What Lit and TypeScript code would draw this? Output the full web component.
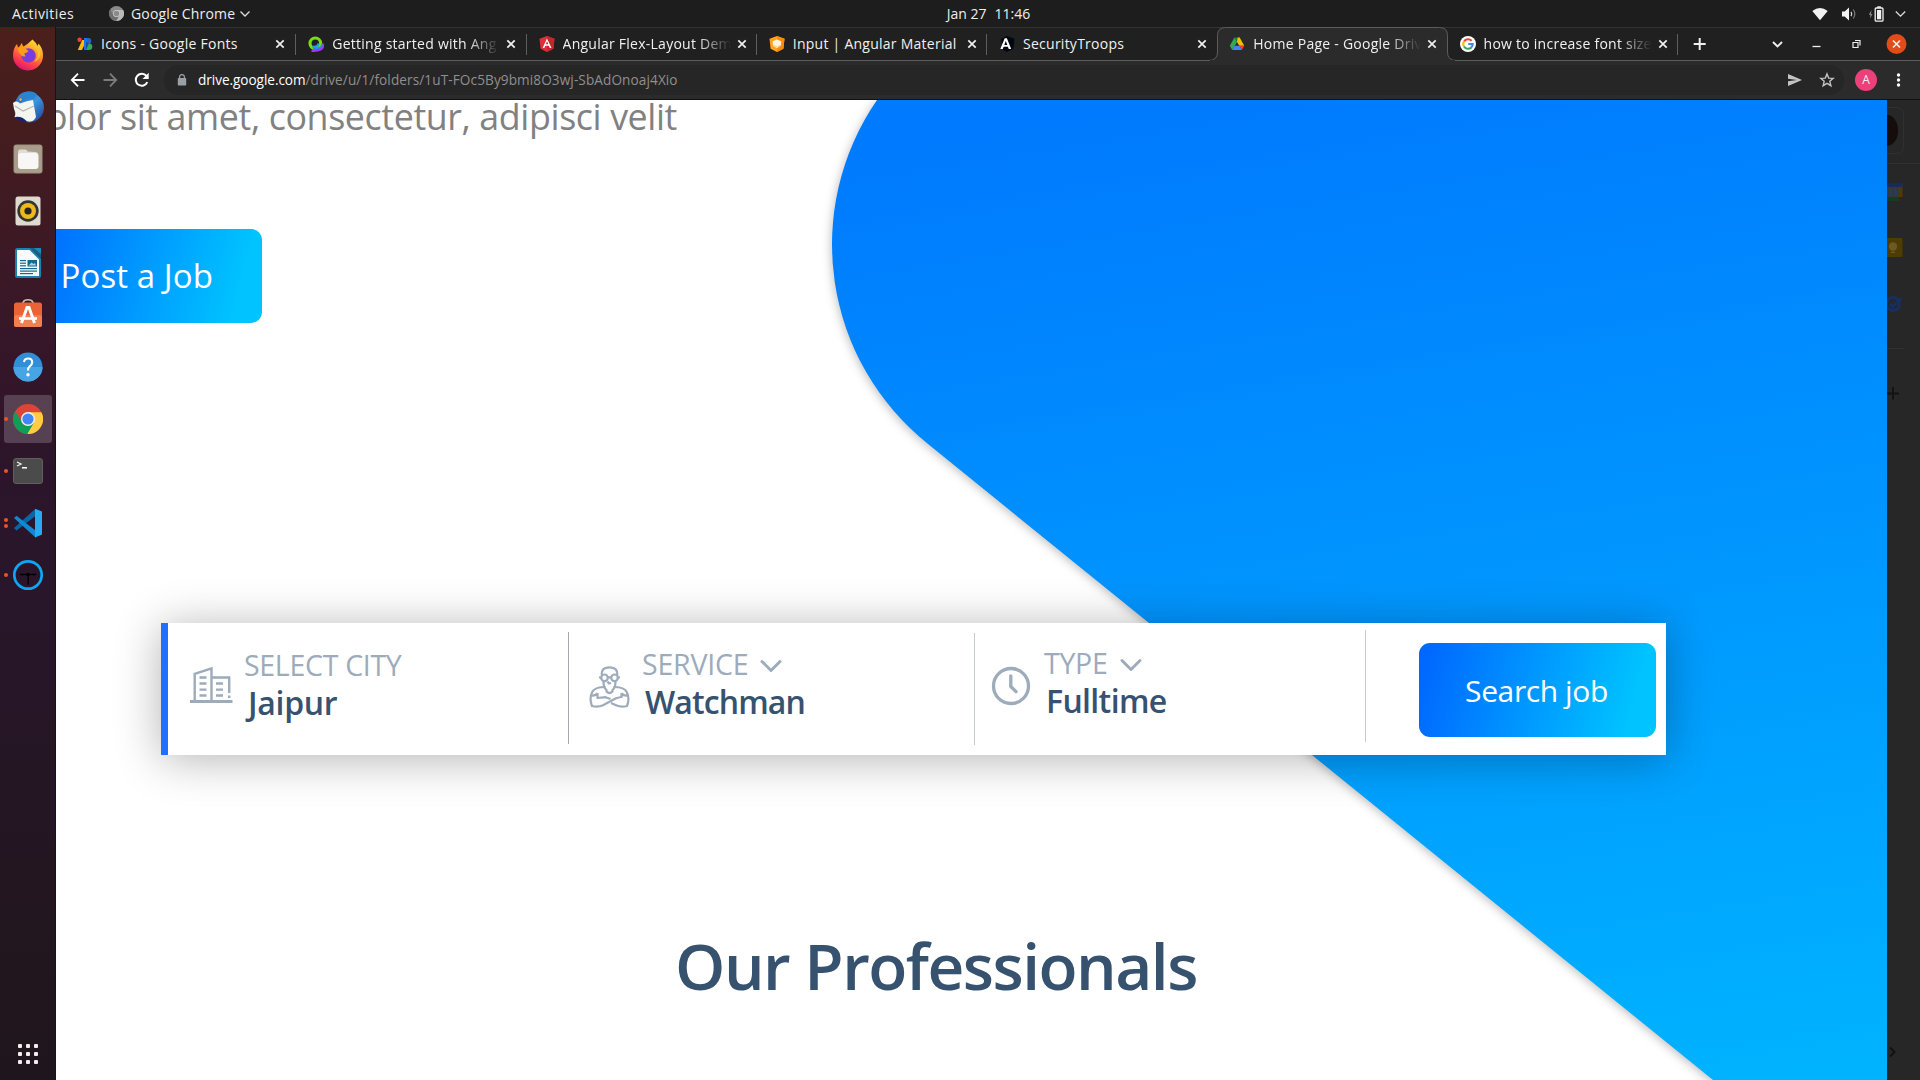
import { LitElement, html, css, svg, nothing } from "lit";
import { customElement } from "lit/decorators.js";
import { classMap } from "lit/directives/class-map.js";

const chromeLogo = (size: number, gray = false) => {
  const c = gray
    ? { r: "#8b8b8b", y: "#b9b9b9", g: "#6f6f6f", b: "#8a8a8a", w: "#d0d0d0" }
    : { r: "#dc4437", y: "#ffcd40", g: "#0f9d58", b: "#4285f4", w: "#f1f1f1" };
  return html`<svg width=${size} height=${size} viewBox="0 0 30 30">
    <circle cx="15" cy="15" r="15" fill=${c.r} />
    <path d="M15 8.2H28.4A15 15 0 0 1 14.2 30L20.9 18.4Z" fill=${c.y} />
    <path d="M2.2 7.2L9.1 18.4Q11.5 22.5 17 21.6L20.9 18.4L14.2 30A15 15 0 0 1 2.2 7.2Z" fill=${c.g} />
    <circle cx="15" cy="15" r="7" fill=${c.w} />
    <circle cx="15" cy="15" r="5.6" fill=${c.b} />
  </svg>`;
};

const favFonts = html`<svg width="16" height="16" viewBox="0 0 16 16">
  <path d="M5.2 4h4.3L5 14H.8Z" fill="#ffbb00" /><circle cx="2.6" cy="3.8" r="2.2" fill="#ea4335" />
  <path d="M7 2h3.2v12H7Z" fill="#1a73e8" /><path d="M10 2h1.4a2.9 2.9 0 0 1 0 5.8H10Z" fill="#2a63c8" />
  <path d="M9.8 7.4h2.2a3.3 3.3 0 0 1 0 6.6H9.8Z" fill="#34a853" /><path d="M9 5.6l2.8 2-2.8 6Z" fill="#174ea6" />
</svg>`;
const favRouting = html`<svg width="16" height="16" viewBox="0 0 16 16">
  <circle cx="7.300" cy="7.300" r="5.300" fill="none" stroke="#78dc10" stroke-width="3.200" />
  <path d="M14.600 7.500Q14.500 13.500 5 13" stroke="#1c8fe8" stroke-width="2.400" fill="none" />
  <path d="M4.500 10.800Q10 11.500 10.500 7.500" stroke="#1f9cf0" stroke-width="2.400" fill="none" />
  <path d="M15.300 8.500Q15.500 15.500 3.500 14.800" stroke="#a334fa" stroke-width="2.200" fill="none" />
</svg>`;
const favAngular = html`<svg width="16" height="16" viewBox="0 0 16 16">
  <path d="M8 0l7.500 2.700-1.100 10L8 16l-6.400-3.300L.5 2.700Z" fill="#dd3138" /><path d="M8 0l7.500 2.700-1.100 10L8 16Z" fill="#c3262e" />
  <path d="M8 2.400L3.600 12h1.700l1-2.300h3.500l1 2.300h1.700ZM8 5.300l1.300 3H6.800Z" fill="#fff" fill-rule="evenodd" />
</svg>`;
const favMaterial = html`<svg width="16" height="16" viewBox="0 0 16 16">
  <path d="M8 0l7.500 2.700-1.100 10L8 16l-6.400-3.300L.5 2.700Z" fill="#ffa21f" /><path d="M8 0l7.500 2.700-1.100 10L8 16Z" fill="#fb8c00" />
  <path d="M8 3.600l4.200 1.600L12 9.600 8 12.300 3.900 9.800 3.800 5.200Z" fill="#fff3dc" /><path d="M4.200 9l3.800 2.200L11.900 9" stroke="#ffc977" fill="none" />
</svg>`;
const favDark = html`<svg width="16" height="16" viewBox="0 0 16 16">
  <path d="M8 0l7.500 2.700-1.100 10L8 16l-4-2.100L2 3Z" fill="#020812" />
  <path d="M5.700 2.200h2.200L12.200 13H9.700l-.8-2.200H4.600L3.800 13H1.300ZM6.800 5.100L5.300 9h3Z" fill="#fff" fill-rule="evenodd" />
</svg>`;
const favDrive = html`<svg width="16" height="16" viewBox="0 0 16 16">
  <path d="M5.400 1.600h5.200L13 5.800 8 6.100Z" fill="#188038" /><path d="M5.400 1.600L.8 9.700l2.400 4.200L8 6.100Z" fill="#34a853" />
  <path d="M10.600 1.600H8.700L8 6.100l2.300 3.700h5Z" fill="#fbbc04" /><path d="M10.300 9.700h5l-2.500 4.400Z" fill="#ea4335" />
  <path d="M5.600 9.700h4.800l2.400 4.400H3.200Z" fill="#4285f4" />
</svg>`;
const favGoogle = html`<svg width="16" height="16" viewBox="0 0 16 16">
  <circle cx="8" cy="8" r="8" fill="#fff" /><g fill="none" stroke-width="2.100">
  <path d="M11.600 4.800A4.700 4.700 0 0 0 4 5.500" stroke="#ea4335" /><path d="M4 5.500a4.700 4.700 0 0 0 0 5" stroke="#fbbc05" />
  <path d="M4 10.500a4.700 4.700 0 0 0 7.200 1.100" stroke="#34a853" /><path d="M8.200 8h4.500a4.700 4.700 0 0 1-1.600 3.600" stroke="#4285f4" /></g>
</svg>`;

const TABS = [
  { icon: favFonts, title: "Icons - Google Fonts" },
  { icon: favRouting, title: "Getting started with Ang", fade: true },
  { icon: favAngular, title: "Angular Flex-Layout Dem", fade: true },
  { icon: favMaterial, title: "Input | Angular Material" },
  { icon: favDark, title: "SecurityTroops" },
  { icon: favDrive, title: "Home Page - Google Driv", fade: true, active: true },
  { icon: favGoogle, title: "how to increase font size", fade: true },
];

@customElement("system-bar")
class SystemBar extends LitElement {
  static styles = css`
    :host { display: grid; grid-template-columns: 1fr auto 1fr; align-items: center; height: 27px; background: #1d1d1d;
      color: #eee; font: 14px/26px "Open Sans", sans-serif; white-space: pre; }
    svg { display: block; }
    .left { display: flex; align-items: center; padding-left: 12px; }
    .act { letter-spacing: 0.45px; width: 97px; }
    .app { letter-spacing: 0.17px; padding: 0 5px 0 7px; }
    .clock { display: flex; gap: 8px; transform: translateX(28.5px); }
    .right { display: flex; align-items: center; justify-content: flex-end; padding-right: 14px; }
    .wifi { margin-right: 13px; } .vol { margin-right: 11px; } .bat { margin-right: 11px; }
  `;
  render() {
    return html`
      <div class="left"><span class="act">Activities</span>${chromeLogo(15, true)}<span class="app">Google Chrome</span>
        ${svg`<svg width="10" height="8" viewBox="0 0 10 8" fill="none" stroke="#ddd" stroke-width="1.300"><path d="M.5 1.500L5 6l4.500-4.500"/></svg>`}</div>
      <div class="clock"><span>Jan 27</span><span>11:46</span></div>
      <div class="right">
        <svg class="wifi" width="16" height="14" viewBox="0 0 16 14"><path d="M.3 4Q8-2.200 15.700 4L8 13.200Z" fill="#f2f2f2" /></svg>
        <svg class="vol" width="16" height="14" viewBox="0 0 16 14"><path d="M1 4.500h2.700L8 .5v13L3.700 9.500H1Z" fill="#f2f2f2" />
          <path d="M10 4.800q1.500 2.200 0 4.400" stroke="#ddd" fill="none" stroke-width="1.200" /><path d="M12.300 2.500q3 4.500 0 9" stroke="#777" fill="none" stroke-width="1.200" /></svg>
        <svg class="bat" width="16" height="16" viewBox="0 0 16 16"><path d="M3.500 4L.8 8.800h1.700L2 12.500 4.500 8H3Z" fill="#8c8c8c" />
          <rect x="7.200" y="2" width="7.800" height="13.200" rx="1" fill="none" stroke="#f2f2f2" stroke-width="1.300" /><rect x="9" y="4" width="4.200" height="9.300" fill="#f2f2f2" /><rect x="9.300" y=".3" width="3.600" height="1.500" fill="#f2f2f2" /></svg>
        <svg width="11" height="8" viewBox="0 0 11 8" fill="none" stroke="#ddd" stroke-width="1.300"><path d="M.8 1.500L5.500 6.200l4.700-4.700" /></svg>
      </div>`;
  }
}

const firefox = html`<svg width="32" height="32" viewBox="0 0 32 32">
  <defs><linearGradient id="f" x1=".8" y1="0" x2=".3" y2="1"><stop offset="0" stop-color="#ffe83a" /><stop offset=".4" stop-color="#ff9426" /><stop offset=".75" stop-color="#ff3a4c" /><stop offset="1" stop-color="#d6127c" /></linearGradient></defs>
  <path d="M20.500.5Q24 3.500 25.500 7l1-2.500Q31 9.500 31 16A15 15 0 0 1 1 17Q1 9 5 5l1 3.500 2-1.500q1-2.500 2-3 0 2.500 1.500 3.500Q16 5 20.500.5Z" fill="url(#f)" />
  <circle cx="16.500" cy="16.500" r="7.200" fill="#7a3ce0" />
  <path d="M6 9q5-2 8 1l2.500 2q-1 2-4 2.200 0 2 1 3-3.500 1-5-2Q6 13 6 9Z" fill="#ff9c1a" />
  <path d="M17 8q6-2 8.500 5 1 6-3.500 10 4.500-1.500 6.500-7 0-6-5-10-3 0-6.500 2Z" fill="#ffc328" />
</svg>`;
const thunderbird = html`<svg width="34" height="34" viewBox="0 0 34 34">
  <defs><linearGradient id="t" x1="0" y1="0" x2="1" y2="1"><stop offset="0" stop-color="#1d63b8" /><stop offset=".5" stop-color="#3a97dc" /><stop offset="1" stop-color="#23398f" /></linearGradient></defs>
  <circle cx="18" cy="17.500" r="15" fill="url(#t)" /><path d="M5 10q3-8 11-8.500Q22 .5 26 4l-3 5-11-1Z" fill="#2b82d0" />
  <circle cx="9.500" cy="9.500" r="1.200" fill="#f6b93b" />
  <path d="M2 13q4-3 7 .5 7-3 13-3.500L25 27q-3 6-9 4Q10 28 3.500 27q2-4-.5-8Z" fill="#f5f5f0" />
  <path d="M4 16l8 5 11-5" stroke="#b7b7ae" fill="none" stroke-width="1.200" /><path d="M4 27q8-1 12 5-9 0-12-5Z" fill="#1a2370" />
</svg>`;
const files = html`<svg width="30" height="30" viewBox="0 0 30 30"><rect x=".5" y=".5" width="29" height="29" rx="3" fill="#9e937f" /><rect x="1.500" y="1.500" width="27" height="27" rx="2" fill="#a89e8b" />
  <path d="M5 8q0-2.500 2.500-2.500H12q2 0 2.500 2L22 8q3 0 3 3v10q0 3.500-3.500 3.500h-13Q5 24.500 5 21Z" fill="#e0ddd5" /><rect x="5" y="9" width="20.500" height="16" rx="3" fill="#f8f7f5" /></svg>`;
const rhythm = html`<svg width="26" height="30" viewBox="0 0 26 30"><rect x=".5" y=".5" width="25" height="29" rx="2.500" fill="#dedad0" /><circle cx="13" cy="15" r="10.700" fill="#343434" /><circle cx="13" cy="15" r="8" fill="#eeb91d" /><circle cx="13" cy="15" r="3.600" fill="#242424" /></svg>`;
const writer = html`<svg width="26" height="30" viewBox="0 0 26 30"><path d="M2.500 1H15l10 10v16.500q0 1.500-1.500 1.500h-21Q1 29 1 27.500v-25Q1 1 2.500 1Z" fill="#f7fbfd" stroke="#1584b3" stroke-width="2" />
  <path d="M15 0h11v10Z" fill="#1c5f80" /><path d="M19 0h7v6Z" fill="#1a8abd" /><g fill="#16688c"><rect x="5" y="12" width="6" height="1.200" /><rect x="5" y="14.600" width="6" height="1.200" /><rect x="5" y="17.200" width="6" height="1.200" /><rect x="5" y="20" width="17" height="1.200" /><rect x="5" y="22.500" width="17" height="1.200" /><rect x="5" y="25" width="13" height="1.200" /><rect x="12.500" y="12" width="9.500" height="6.500" /></g><path d="M13.500 17.500l3-3 2 1.500 1.500-1 1 2.500Z" fill="#a8d4e8" /></svg>`;
const software = html`<svg width="30" height="32" viewBox="0 1 30 32"><path d="M10 6V4.500Q11 1.800 15 1.800t5 2.700V6" stroke="#c9bfa8" stroke-width="1.600" fill="none" /><rect x="1" y="4.500" width="28" height="24.500" rx="2.500" fill="#ea6236" /><rect x="1" y="17" width="28" height="12" rx="2.500" fill="#f0804e" />
  <g stroke="#fff" fill="none" stroke-width="3"><path d="M8.500 25L14 9.500h2l5.500 15.500" /><path d="M6 20.500h18" stroke-width="2.600" /></g></svg>`;
const help = html`<svg width="30" height="30" viewBox="0 0 30 30"><circle cx="15" cy="15" r="14.500" fill="#2f8fd8" /><path d="M.5 15a14.500 14.500 0 0 0 29 0Z" fill="#47a5e6" /><path d="M11 10q.5-3.500 4.200-3.500 4 0 4 3.700 0 2.300-2.500 4.200-1.700 1.400-1.700 4" stroke="#fff" stroke-width="2.100" fill="none" /><circle cx="15" cy="22.800" r="1.700" fill="#fff" /></svg>`;
const terminal = html`<svg width="30" height="26" viewBox="0 0 30 26"><rect x=".5" y=".5" width="29" height="25" rx="2.500" fill="#4b4b4b" stroke="#5f5f5f" /><path d="M4 4l4 2-4 2" stroke="#eee" fill="none" stroke-width="1.300" /><path d="M9 9.800h5" stroke="#fff" stroke-width="1.500" /></svg>`;
const vscode = html`<svg width="30" height="30" viewBox="0 0 30 30"><path d="M1 20l2.500 2.500L22.500 8V.8Z" fill="#0468a8" /><path d="M1 10l2.500-2.300L22.500 22.500V29.500Z" fill="#0f8ad2" /><path d="M22 .8L29 3.500v23L22 29.500Z" fill="#29a9f2" /></svg>`;
const clock = html`<svg width="32" height="32" viewBox="0 0 32 32"><circle cx="16" cy="16" r="13.700" fill="none" stroke="#10a5f5" stroke-width="2.700" /><path d="M8 15.500h16M16.200 15v10.500" stroke="#000" stroke-width="1.400" /><circle cx="16" cy="15.500" r="1.700" /></svg>`;

@customElement("app-dock")
class AppDock extends LitElement {
  static styles = css`
    :host { display: flex; flex-direction: column; width: 56px; box-sizing: border-box; padding-top: 2px; border-right: 1px solid #1b1014;
      background: linear-gradient(#4c1f1b 0%, #431c20 12%, #361629 30%, #2c152a 42%, #28162a 55%, #22161f 85%, #1f151c 100%); }
    .cell { display: grid; place-items: center; height: 52px; width: 55px; position: relative; }
    .tile { display: grid; place-items: center; width: 48px; height: 48px; border-radius: 3px; }
    .on .tile { background: rgba(255, 255, 255, 0.19); }
    .dots { position: absolute; left: 4px; top: 0; bottom: 0; display: flex; flex-direction: column; justify-content: center; gap: 2.5px; }
    .dot { width: 4px; height: 4px; border-radius: 50%; background: #e95420; }
    .apps { margin: auto 0 16px 18px; display: grid; grid-template-columns: repeat(3, 4px); gap: 4px; }
    .apps i { height: 4px; background: #f0eeee; border-radius: 1px; }
    svg { display: block; }
  `;
  render() {
    const items: [unknown, number, boolean?][] = [[firefox, 0], [thunderbird, 0], [files, 0], [rhythm, 0], [writer, 0], [software, 0], [help, 0], [chromeLogo(30), 1, true], [terminal, 1], [vscode, 2], [clock, 1]];
    return html`${items.map(([icon, n, on]) => html`<div class=${classMap({ cell: true, on: !!on })}>
        <div class="tile">${icon}</div>
        ${n ? html`<div class="dots">${Array.from({ length: n }, () => html`<div class="dot"></div>`)}</div>` : nothing}
      </div>`)}
      <div class="apps">${Array.from({ length: 9 }, () => html`<i></i>`)}</div>`;
  }
}

@customElement("browser-chrome")
class BrowserChrome extends LitElement {
  static styles = css`
    :host { display: block; font: 14px/20px "Open Sans", sans-serif; color: #f0f0f0; border-top: 1px solid #333; box-sizing: border-box; height: 73px; background: #202020; }
    svg { display: block; }
    .strip { height: 32px; display: flex; padding-left: 9px; border-bottom: 1px solid #5c5c5c; }
    .tab { width: 230.25px; box-sizing: border-box; display: flex; align-items: center; padding-left: 12px; position: relative; flex: none; }
    .tab:first-child { width: 231.3px; }
    .fav { flex: none; width: 16px; z-index: 1; }
    .title { width: 169px; margin-left: 8px; white-space: pre; letter-spacing: 0.25px; z-index: 1; }
    .fade { -webkit-mask-image: linear-gradient(90deg, #000 calc(100% - 34px), transparent calc(100% - 1px)); mask-image: linear-gradient(90deg, #000 calc(100% - 34px), transparent calc(100% - 1px)); }
    .x { z-index: 1; margin-left: 5px; }
    .sep { position: absolute; right: 0; top: 6px; width: 1px; height: 21px; background: #5e5e5e; }
    .shape { position: absolute; left: -9px; top: -1px; }
    .wc { display: flex; align-items: center; padding-left: 13.500px; }
    .bar { height: 38px; background: #2b2b2b; display: flex; align-items: center; border-bottom: 1px solid #111; padding-left: 14px; }
    .nav { display: flex; gap: 16px; width: 94px; }
    .omni { width: 1680px; height: 30px; border-radius: 15px; background: #262626; box-sizing: border-box; padding: 0 9px 0 13px; display: flex; align-items: center; }
    .url { margin-left: 11px; font-size: 13.600px; letter-spacing: 0.1px; color: #8f8f8f; flex: 1; }
    .host { color: #fff; letter-spacing: -0.05px; }
    .tools { display: flex; gap: 16px; }
    .me { width: 22px; height: 22px; margin-left: 11px; border-radius: 50%; background: #ec407a; font: 12px/22px "Open Sans", sans-serif; text-align: center; }
    .more { margin-left: 19px; }
  `;
  render() {
    const x = html`<svg class="x" width="10" height="10" viewBox="0 0 10 10" stroke="#f0f0f0" stroke-width="1.700"><path d="M1.300 1.300l7.400 7.400M8.700 1.300L1.300 8.700" /></svg>`;
    return html`
      <div class="strip">
        ${TABS.map((t, i) => html`<div class="tab">
          ${t.active ? html`<svg class="shape" width="249" height="34" viewBox="0 0 249 34"><path d="M.5 33.500Q9.500 33.500 9.500 25V8.500Q9.500 .5 17.500 .5H231.500Q239.500 .5 239.500 8.500V25Q239.500 33.500 248.500 33.500" fill="#2b2b2b" stroke="#5c5c5c" /><path d="M2 33.500H247" stroke="#2b2b2b" /></svg>` : nothing}
          <div class="fav">${t.icon}</div><div class=${classMap({ title: true, fade: !!t.fade })}>${t.title}</div>${x}
          ${i === 4 || i === 5 ? nothing : html`<div class="sep"></div>`}
        </div>`)}
        <div class="wc">
          <svg width="220" height="24" viewBox="0 0 220 24" fill="none" stroke="#f0f0f0">
            <path d="M8.700 6v12M2.700 12h12" stroke-width="2" />
            <path d="M82 10l4.500 4.500L91 10" stroke-width="1.900" />
            <path d="M121.500 14.500h8" stroke-width="1.300" />
            <path d="M162 10.500h5v5h-5zM164 8.500h5v5" stroke-width="1.200" />
            <circle cx="205.500" cy="12" r="10" fill="#e24c18" stroke="none" /><path d="M202 8.500l7 7M209 8.500l-7 7" stroke-width="1.600" />
          </svg>
        </div>
      </div>
      <div class="bar">
        <div class="nav">
          <svg width="16" height="16" viewBox="0 0 16 16" fill="none" stroke="#fff" stroke-width="1.800"><path d="M14.500 8H2M8 1.700L1.800 8 8 14.300" /></svg>
          <svg width="16" height="16" viewBox="0 0 16 16" fill="none" stroke="#7c7c7c" stroke-width="1.800"><path d="M1.500 8H14M8 1.700L14.200 8 8 14.300" /></svg>
          <svg width="16" height="16" viewBox="0 0 16 16" fill="none" stroke="#fff" stroke-width="2"><path d="M13.300 10.200A6 6 0 1 1 12.500 4" /><path d="M14.700.8v6.200H8.500Z" fill="#fff" stroke="none" /></svg>
        </div>
        <div class="omni">
          <svg width="10" height="12" viewBox="0 0 10 12"><rect x=".8" y="4" width="8.400" height="7.600" rx=".8" fill="#9aa0a6" /><path d="M2.600 4.500V3a2.400 2.400 0 0 1 4.800 0v1.500" fill="none" stroke="#9aa0a6" stroke-width="1.300" /></svg>
          <div class="url"><span class="host">drive.google.com</span>/drive/u/1/folders/1uT-FOc5By9bmi8O3wj-SbAdOnoaj4Xio</div>
          <div class="tools">
            <svg width="16" height="16" viewBox="0 0 16 16"><path d="M1 2l14 6-14 6V9.300L10 8 1 6.700Z" fill="#c4c4c4" /></svg>
            <svg width="16" height="16" viewBox="0 0 16 16" fill="none" stroke="#c4c4c4" stroke-width="1.400"><path d="M8 1.900l1.700 4.200 4.500.3-3.400 2.900 1.100 4.400L8 11.300l-3.900 2.400 1.100-4.400L1.800 6.400l4.500-.3Z" /></svg>
          </div>
        </div>
        <div class="me">A</div>
        <svg class="more" width="5" height="14" viewBox="0 0 5 14" fill="#fff"><circle cx="2.500" cy="2" r="1.700" /><circle cx="2.500" cy="7" r="1.700" /><circle cx="2.500" cy="12" r="1.700" /></svg>
      </div>`;
  }
}

const chevron = html`<svg class="chev" width="24" height="14" viewBox="0 0 24 14" fill="none" stroke="#9dabba" stroke-width="3" stroke-linecap="round" stroke-linejoin="round"><path d="M3 2.500l9 9 9-9" /></svg>`;

@customElement("search-panel")
class SearchPanel extends LitElement {
  static styles = css`
    :host { display: grid; grid-template-columns: 401px 406px 391px 1fr; width: 1505px; height: 132px; box-sizing: border-box; border-left: 7px solid #266dff; background: #fff;
      box-shadow: 0 4px 46px rgba(0, 0, 0, 0.3); position: relative; font-family: "Open Sans", sans-serif; }
    svg { display: block; }
    .seg { display: flex; align-items: flex-start; box-sizing: border-box; height: 112px; border-right: 1px solid #c3cad2; white-space: pre; }
    .city { margin-top: 9px; padding-left: 22px; border-right-color: #a4a8ac; }
    .service { margin-top: 10px; padding-left: 20px; }
    .type { margin-top: 7px; padding-left: 15px; }
    .city .txt { margin: 14.500px 0 0 11px; } .service .txt { margin: 12.500px 0 0 11px; } .type .txt { margin: 14.500px 0 0 12px; }
    .city > svg { margin-top: 32px; } .service > svg { margin-top: 32px; } .type > svg { margin-top: 35px; }
    .label { display: flex; align-items: center; font-size: 28.500px; line-height: 37px; color: #9dabba; letter-spacing: -0.3px; }
    .service .label { letter-spacing: -0.2px; }
    .chev { margin-left: 11px; margin-top: 3px; } .type .chev { margin-left: 12px; }
    .value { font-size: 32px; line-height: 38px; font-weight: 600; color: #37526f; }
    .city .value { padding-left: 4px; letter-spacing: -0.3px; } .service .value { padding-left: 3px; letter-spacing: -0.9px; } .type .value { padding-left: 2px; letter-spacing: -0.65px; }
    .btn { margin: 20px 0 0 53px; width: 237px; height: 94px; border-radius: 11px; background: linear-gradient(105deg, #0067ff 3%, #00c3ff 88%); color: #fff; font-size: 30px; letter-spacing: -0.4px; text-indent: -2px; line-height: 95px; text-align: center; }
  `;
  render() {
    return html`
      <div class="seg city"><svg width="43" height="42" viewBox="0 0 43 42" fill="none" stroke="#9dabba" stroke-width="2.400">
          <path d="M0 37.600h42.500" stroke-width="3" /><path d="M4.700 37V9.800L21.500 4.300V13M21.500 37V13.500H39.200V29M39.200 31.500v2.500" />
          <path d="M9.500 13.500h7M9.500 19.500h7M9.500 25.600h7M9.500 31.500h7M26 19.500h7M26 25.600h7M26 31.500h7" /></svg><div class="txt"><div class="label">SELECT CITY</div><div class="value">Jaipur</div></div></div>
      <div class="seg service"><svg width="42" height="44" viewBox="0 0 42 44" fill="none" stroke="#9dabba" stroke-width="2.200" stroke-linejoin="round">
          <path d="M13 11Q11.500 2.300 20.500 2.300T28 11" /><circle cx="15.500" cy="12.800" r="3.300" /><circle cx="25.500" cy="12.800" r="3.300" /><path d="M19 12.300h3M11.500 11.500l-.8 2M29.500 11.500l.8 2" />
          <path d="M14.500 16.500q0 6.500 3 8.500v1.500q3 3 6 0v-1.500q3-2 3-8.500M18.500 16.500l1.500 2 2-.5" />
          <path d="M16.500 22Q5.500 22 3.200 27q-3.200 6.500-.2 14 6 1.500 11-.8l13.500-7.200q4 0 6-3M24.500 22Q35.500 22 37.800 27q3.200 6.500.2 14-6 1.500-11-.8l-5-2.200M2 30.500q5 .5 6.500-2.500M39 30.500q-5 .5-6.500-2.500M8.500 28v5l8-.8 5 1.800M32.500 28v5" /></svg><div class="txt"><div class="label">SERVICE${chevron}</div><div class="value">Watchman</div></div></div>
      <div class="seg type"><svg width="42" height="42" viewBox="0 0 42 42" fill="none" stroke="#9dabba" stroke-width="3.300" stroke-linecap="round"><circle cx="21" cy="21" r="17.500" /><path d="M20.800 10.800v10.700l5.200 5.200" /></svg><div class="txt"><div class="label">TYPE${chevron}</div><div class="value">Fulltime</div></div></div>
      <div class="btn">Search job</div>`;
  }
}

@customElement("page-preview")
class PagePreview extends LitElement {
  static styles = css`
    :host { display: block; position: relative; overflow: hidden; background: #fff; font-family: "Open Sans", sans-serif; }
    .blob { position: absolute; left: 0; top: 0; filter: drop-shadow(-1px 2px 5px rgba(0, 0, 0, 0.25)); }
    .lead { position: relative; display: flex; justify-content: flex-end; margin-top: -2px; width: 621px; height: 50px; font-size: 35.800px; line-height: 36px; letter-spacing: -0.39px; color: #818181; white-space: pre; }
    .post { position: relative; margin-top: 81px; box-sizing: border-box; padding-left: 4.500px; width: 206px; height: 94px; border-radius: 0 11px 11px 0; color: #fff; font-size: 33px; line-height: 94px; letter-spacing: 0.1px;
      background: linear-gradient(105deg, #0067ff 3%, #00c3ff 88%) right / 237px 94px; }
    search-panel { margin: 300px 0 0 105px; }
    h2 { position: relative; margin: 171px 0 0 619px; font-size: 64px; line-height: 80px; font-weight: 600; letter-spacing: -1.5px; color: #37526f; white-space: pre; }
  `;
  render() {
    return html`
      <svg class="blob" width="1831" height="980" viewBox="56 100 1831 980">
        <defs><linearGradient id="sky" gradientUnits="userSpaceOnUse" x1="1180" y1="100" x2="1370" y2="1280"><stop offset="0" stop-color="#007afe" /><stop offset="1" stop-color="#00baff" /></linearGradient></defs>
        <path d="M877 100A255 255 0 0 0 928 444L1149 623 1312 755 1713 1080 1763 1120H1960V60H905Q889 80 877 100Z" fill="url(#sky)" />
      </svg>
      <div class="lead">dolor sit amet, consectetur, adipisci velit</div>
      <div class="post">Post a Job</div>
      <search-panel></search-panel>
      <h2>Our Professionals</h2>`;
  }
}

@customElement("side-rail")
class SideRail extends LitElement {
  static styles = css`
    :host { display: flex; flex-direction: column; width: 33px; background: #272727; overflow: hidden; }
    svg { display: block; flex: none; }
    .acct { width: 17px; height: 47px; box-sizing: border-box; margin-top: 7px; border: 1px solid #303030; border-left: 0; border-radius: 0 7px 7px 0; display: flex; align-items: center; }
    .face { width: 11px; height: 31px; border-radius: 0 11px 11px 0 / 0 15px 15px 0; background: #150c0c; }
    .rule { height: 1px; background: #303030; }
    .r1 { margin: 9px 0 19px; } .r2 { width: 17px; margin: 35px 0 38px; }
    .keep { margin: 37px 0 38px; }
    .next { margin: auto 0 22px 2px; }
    .day { font: 600 9px "Open Sans", sans-serif; fill: #1f3a78; }
  `;
  render() {
    return html`
      <div class="acct"><div class="face"></div></div>
      <div class="rule r1"></div>
      <svg width="16" height="18" viewBox="0 0 16 18"><path d="M0 0h14q1.500 0 1.500 1.500V14L12 18H0Z" fill="#4d3b06" /><path d="M0 0h14q1 0 1.500 1v3H0Z" fill="#172c58" /><path d="M0 14h12v4H0Z" fill="#123d1e" /><path d="M12 14h3.500L12 18Z" fill="#4c1613" /><rect y="4" width="11.500" height="10" fill="#373737" /><text class="day" x="1.500" y="12.300">31</text></svg>
      <svg class="keep" width="16" height="19" viewBox="0 0 16 19"><path d="M0 0h14q1.500 0 1.500 1.500v16q0 1.500-1.500 1.500H0Z" fill="#4e3c02" /><circle cx="6" cy="8.500" r="4.200" fill="#6b5a26" /><path d="M4 14.300h4" stroke="#6b5a26" stroke-width="1.400" /></svg>
      <svg width="16" height="18" viewBox="0 0 16 18" fill="none" stroke="#172f60"><circle cx="6" cy="9" r="6.500" stroke-width="3.200" /><path d="M2.500 8.500l3 3.200L14.500 3" stroke-width="2.800" /></svg>
      <div class="rule r2"></div>
      <svg width="13" height="13" viewBox="0 0 13 13" stroke="#131313" stroke-width="2"><path d="M6 0v12.500M0 6.500h12" /></svg>
      <svg class="next" width="8" height="12" viewBox="0 0 8 12" fill="none" stroke="#111" stroke-width="2"><path d="M1 1.500L5.500 6 1 10.500" /></svg>`;
  }
}

@customElement("app-root")
class AppRoot extends LitElement {
  static styles = css`
    :host { display: block; width: 1920px; height: 1080px; overflow: hidden; background: #272727; }
    .desk { display: grid; grid-template-columns: 56px 1fr; height: 1053px; }
    .window { display: grid; grid-template-rows: 73px 1fr; min-width: 0; }
    .content { display: grid; grid-template-columns: 1831px 33px; min-height: 0; }
  `;
  render() {
    return html`<system-bar></system-bar>
      <div class="desk"><app-dock></app-dock>
        <div class="window"><browser-chrome></browser-chrome>
          <div class="content"><page-preview></page-preview><side-rail></side-rail></div>
        </div>
      </div>`;
  }
}
